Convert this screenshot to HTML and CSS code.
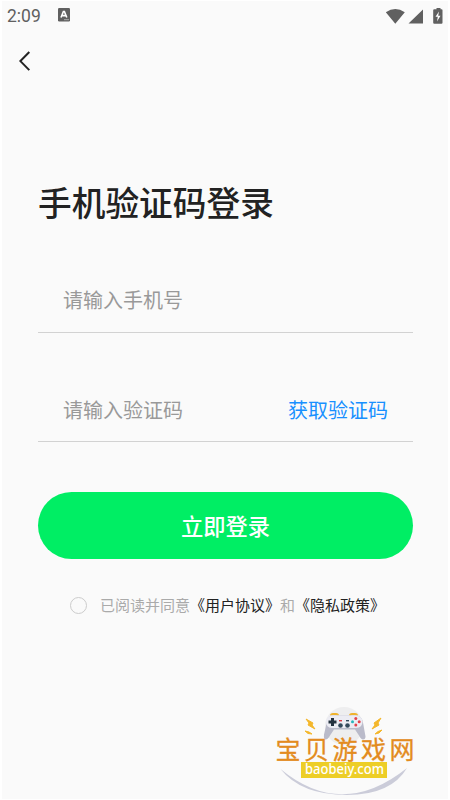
FILE: index.html
```html
<!DOCTYPE html>
<html lang="zh-CN">
<head>
<meta charset="utf-8">
<title>手机验证码登录</title>
<link rel="stylesheet" href="styles.css">
</head>
<body>
<div class="screen">
  <header class="status">
    <span class="time">2:09</span>
    <svg class="app-icon" width="12" height="14" viewBox="0 0 12 14"><rect width="12" height="13.5" rx="1.2" fill="#606060"/><path d="M3 9.5 5.4 3.5h1L8.800 9.500M4 7.600h3.800" fill="none" stroke="#fff" stroke-width="1.6"/><path d="M6 11.700h5" stroke="#aaa" stroke-width="1"/></svg>
    <svg class="signals" width="58" height="18" viewBox="0 0 58 18"><path d="M.8 4.200Q10.300-2.400 19.800 4.200L10.300 15.700Z M38 1.400V15.500H23.500Z" fill="#606060"/><path d="M48.500 1.300h3V0h4v1.300h1q1 0 1 1v12.400q0 1-1 1h-7.300q-1 0-1-1V2.300q0-1 1-1Z" fill="#606060"/><path d="m54 3.500-3.500 5.300h2.300l-.8 4.700 3.500-5.700h-2.300Z" fill="#fff"/></svg>
  </header>
  <nav class="nav"><svg width="14" height="22" viewBox="0 0 14 22"><path d="m11.300 2-8.900 9.100 8.900 9" fill="none" stroke="#222" stroke-width="2"/></svg></nav>
  <main class="login">
    <h1>手机验证码登录</h1>
    <div class="field phone"><span>请输入手机号</span></div>
    <div class="field code"><span>请输入验证码</span><a class="get-code">获取验证码</a></div>
    <button class="submit">立即登录</button>
    <div class="agreement"><i class="radio"></i><p>已阅读并同意<b>《用户协议》</b>和<b>《隐私政策》</b></p></div>
  </main>
  <svg class="brand" width="160" height="100" viewBox="0 0 160 100">
    <circle cx="79" cy="26" r="19" fill="#eeeeef"/>
    <path d="M15.500 69Q77 120 142 68Q126 95 82 95Q36 95 15.500 69Z" fill="#cbccd9"/>
    <path d="M66 15.500q0-1.500 2-1.500h3q2 0 2 1.500M85 15.500q0-1.500 2-1.500h3q2 0 2 1.500" fill="none" stroke="#efb32d" stroke-width="2"/>
    <path d="M66 15.500h26q5 1 6 7l2.500 14q0 3-2.500 3-2 0-4-4l-4-6H69l-4 6q-2 4-4.500 4-2 0-1.500-5l3-13q1-5 4-6Z" fill="#babbca"/>
    <path d="M66 15.500h26q5 1 5.500 6 0 6-6.500 6.500H67q-6-.5-6-6 0-5 5-6.500Z" fill="#ececf3"/>
    <path d="M67.500 18v8M63.500 22h8" stroke="#24323f" stroke-width="3"/>
    <circle cx="75.500" cy="25.500" r="2.300" fill="#34495b"/><circle cx="82.500" cy="25.500" r="2.300" fill="#34495b"/>
    <path d="M74 20.700h3" stroke="#d83a42" stroke-width="1.400"/><path d="M81 20.700h3" stroke="#34495b" stroke-width="1.400"/>
    <circle cx="90.800" cy="18.500" r="1.500" fill="#e4424c"/><circle cx="90.800" cy="25" r="1.500" fill="#e4424c"/><circle cx="87.500" cy="21.800" r="1.500" fill="#27b6bb"/><circle cx="94.200" cy="21.800" r="1.500" fill="#e4424c"/>
    <path d="m41 19 7 4-1 2 3 4-7-4 1-2ZM40 31l4 1 3 2-4-.5ZM116 18l-7 5 1 2-3 4 7-4-1-2ZM117 30l-4 1.500-3 2.500 4-1Z" fill="#f4b72b" stroke="#f4b72b"/>
    <text class="brand-name" x="10.500" y="58.500" textLength="139" lengthAdjust="spacing">宝贝游戏网</text>
    <rect x="36" y="62" width="86" height="16" fill="#edce27"/>
    <text class="brand-url" x="40" y="74" textLength="79" lengthAdjust="spacingAndGlyphs">baobeiy.com</text>
  </svg>
</div>
</body>
</html>
```
FILE: styles.css
```css
* { box-sizing: border-box; }
body { margin: 0; background: #fff; font-family: "Noto Sans CJK SC", sans-serif; }
.screen {
  position: relative;
  width: 450px;
  height: 800px;
  border: solid #fff;
  border-width: 1px 2px;
  background: #fafafa;
  overflow: hidden;
}
.status { display: flex; height: 30px; padding: 7px 6px 0 5px; }
.time { width: 51px; font: 17.5px/16px Roboto, sans-serif; color: #606060; }
.app-icon { margin-top: 0; }
.signals { margin-left: auto; margin-right: -1px; }
.nav { height: 60px; padding: 19px 0 0 16px; }
.nav svg { display: block; }
.login { padding: 0 36px; }
h1 { margin: 86px 0 0; font-size: 33.7px; line-height: 50px; font-weight: 500; color: #222; white-space: nowrap; }
.field {
  display: flex;
  justify-content: space-between;
  margin-right: -1px;
  padding: 0 25px;
  border-bottom: 1.5px solid #d2d2d2;
  font-size: 20px;
  line-height: 30px;
  color: #999;
}
.phone { height: 48px; margin-top: 58px; }
.code { height: 47px; margin-top: 62px; }
.get-code { color: #1890ff; }
.submit {
  display: block;
  width: 375px;
  height: 67px;
  margin-top: 50px;
  padding: 0;
  border: 0;
  border-radius: 34px;
  background: #00ee64;
  color: #fff;
  font: 500 22.3px/67px "Noto Sans CJK SC", sans-serif;
}
.agreement { display: flex; align-items: center; margin: 34px 0 0 32px; height: 24px; }
.radio { width: 17px; height: 17px; border: 1.3px solid #ccc; border-radius: 50%; }
.agreement p { margin: 0 0 0 13px; font-size: 15px; line-height: 24px; color: #aaa; white-space: nowrap; }
.agreement b { font-weight: 400; color: #222; }
.brand { position: absolute; left: 263px; top: 699px; }
.brand-name { font: 25px "Noto Sans CJK SC", sans-serif; fill: #e38b20; stroke: #e38b20; stroke-width: .3; }
.brand-url { font: 500 14px "Noto Sans", sans-serif; fill: #fff; }
```
